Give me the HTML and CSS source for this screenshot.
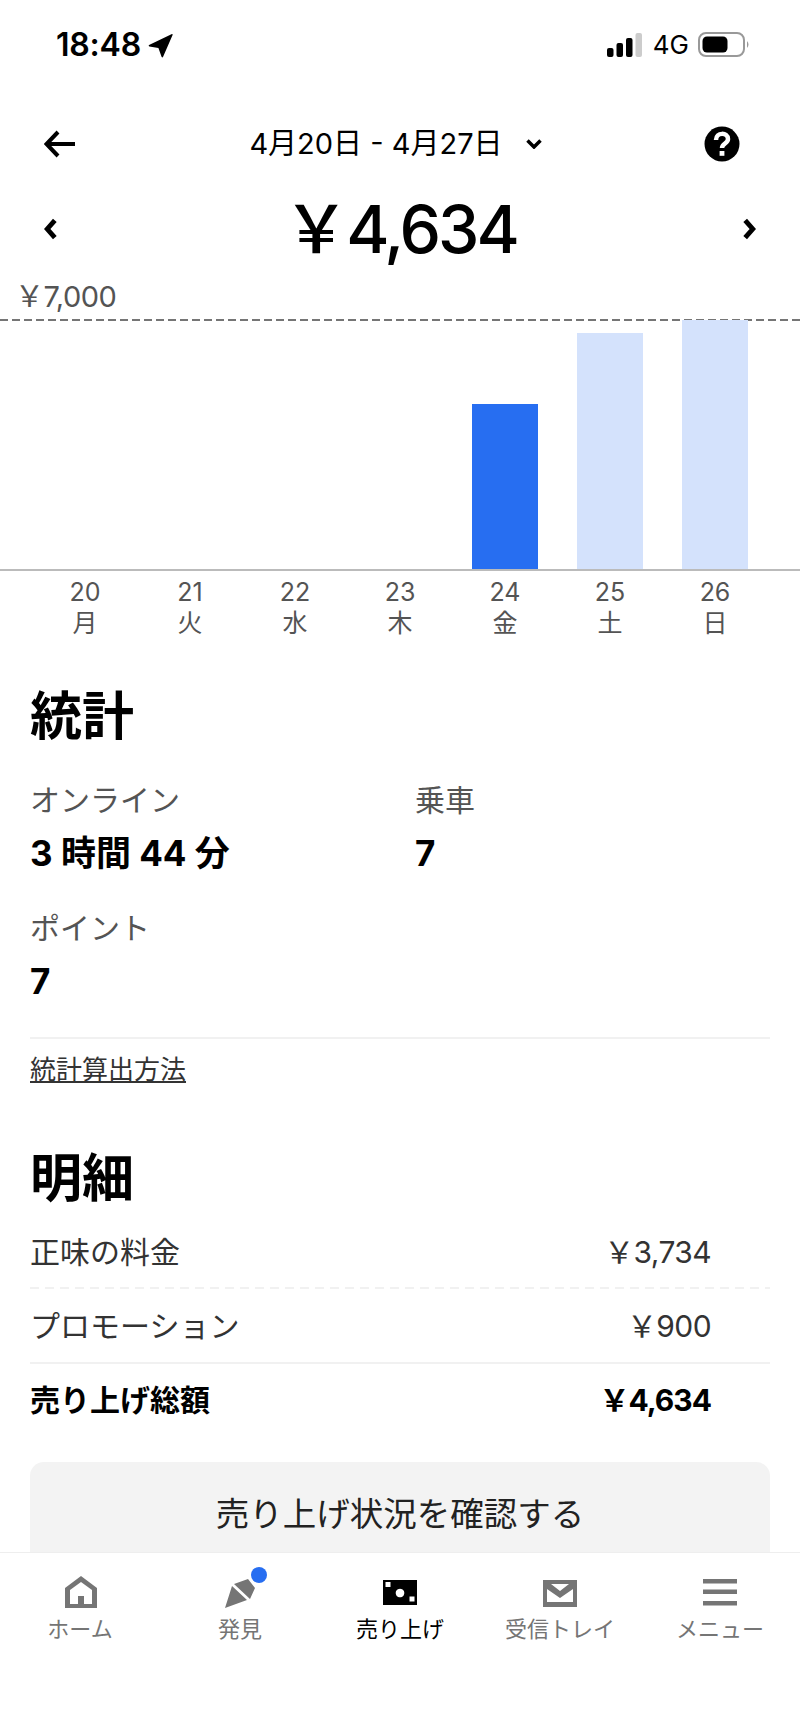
FILE: index.html
```html
<!DOCTYPE html>
<html lang="ja">
<head>
<meta charset="utf-8">
<title>売り上げ</title>
<link rel="stylesheet" href="styles.css">
</head>
<body>
<div class="page">
  <div class="status">
    <div class="status-left">
      <span class="time">18:48</span>
      <svg class="loc" viewBox="0 0 24 24"><path d="M23 1 1 11.500q-1 .8.3 1.400L10 14.300l3 8.500q.8 1.200 1.500 0L23.600 2q.2-1.400-.6-1z"/></svg>
    </div>
    <div class="status-right">
      <svg class="signal" viewBox="0 0 36 24"><rect x="0" y="15" width="6.500" height="9" rx="2"/><rect x="9.500" y="10" width="6.500" height="14" rx="2"/><rect x="19" y="5" width="6.500" height="19" rx="2"/><rect class="signal-off" x="28.500" y="0" width="6.500" height="24" rx="2"/></svg>
      <span class="net">4G</span>
      <svg class="battery" viewBox="0 0 52 26"><rect class="batt-frame" x="1" y="1" width="45" height="23" rx="7"/><rect x="4.500" y="4.500" width="25" height="16" rx="4.500"/><path class="batt-cap" d="M49 9q3 3.500 0 7z"/></svg>
    </div>
  </div>

  <div class="topbar">
    <svg class="back" viewBox="0 0 32 28"><path d="M31 14H3M14 2 2.500 14 14 26"/></svg>
    <div class="range">
      <span>4月20日 - 4月27日</span>
      <svg class="down" viewBox="0 0 16 10"><path d="M1.500 1.500 8 8l6.500-6.500"/></svg>
    </div>
    <svg class="help" viewBox="0 0 36 36"><circle cx="18" cy="18" r="17.500"/><path class="help-q" d="M12 14c0-8 12-8 12-1 0 4.500-6 4.500-6 9"/><rect class="help-dot" x="15.600" y="25" width="4.800" height="4.800"/></svg>
  </div>

  <div class="amount-row">
    <svg class="nav-arrow" viewBox="0 0 12 20"><path d="M10 2 3 10l7 8"/></svg>
    <div class="amount">&#xFFE5;4,634</div>
    <svg class="nav-arrow" viewBox="0 0 12 20"><path d="m2 2 7 8-7 8"/></svg>
  </div>

  <div class="axis-label">&#xFFE5;7,000</div>
  <div class="chart">
    <div class="col"></div><div class="col"></div><div class="col"></div><div class="col"></div>
    <div class="col"><div class="bar bar-on" style="height:165px"></div></div>
    <div class="col"><div class="bar" style="height:236px"></div></div>
    <div class="col"><div class="bar" style="height:249px"></div></div>
  </div>
  <div class="days">
    <div class="day">20<br>月</div><div class="day">21<br>火</div><div class="day">22<br>水</div><div class="day">23<br>木</div><div class="day">24<br>金</div><div class="day">25<br>土</div><div class="day">26<br>日</div>
  </div>

  <section class="stats">
    <h2 class="title">統計</h2>
    <div class="stat-grid">
      <div class="stat"><div class="stat-label">オンライン</div><div class="stat-value">3 時間 44 分</div></div>
      <div class="stat"><div class="stat-label">乗車</div><div class="stat-value">7</div></div>
      <div class="stat"><div class="stat-label">ポイント</div><div class="stat-value">7</div></div>
    </div>
    <div class="link-wrap"><span class="link">統計算出方法</span></div>
  </section>

  <section class="details">
    <h2 class="title">明細</h2>
    <div class="row row-dashed"><span>正味の料金</span><span class="val">&#xFFE5;3,734</span></div>
    <div class="row row-solid"><span>プロモーション</span><span class="val">&#xFFE5;900</span></div>
    <div class="row row-total"><span>売り上げ総額</span><span class="val">&#xFFE5;4,634</span></div>
    <div class="cta">売り上げ状況を確認する</div>
  </section>

  <nav class="tabs">
    <div class="tab">
      <svg class="tab-icon" viewBox="0 0 36 40"><path fill-rule="evenodd" d="M19 3 35 15v20H3V15zM19 9 8 17v14h8v-8h6v8h8V17z"/></svg>
      <span>ホーム</span>
    </div>
    <div class="tab">
      <span class="tab-icon-wrap">
        <svg class="tab-icon" viewBox="0 0 36 40"><path d="M3 35 10 13 25 27zM12 11 26 6l7 9-5 11z"/></svg>
        <span class="dot"></span>
      </span>
      <span>発見</span>
    </div>
    <div class="tab tab-on">
      <svg class="tab-icon" viewBox="0 0 36 40"><path fill-rule="evenodd" d="M1 7h34v25H1zM18 15.700a4.300 4.300 0 1 0 .01 0zM3.500 9v5h5V9zM27.500 23.500v5h5v-5z"/></svg>
      <span>売り上げ</span>
    </div>
    <div class="tab">
      <svg class="tab-icon" viewBox="0 0 36 40"><path fill-rule="evenodd" d="M1 7h34v27H1zM5 16v13h26V16L18 25zM9 11h18l-9 7z"/></svg>
      <span>受信トレイ</span>
    </div>
    <div class="tab">
      <svg class="tab-icon" viewBox="0 0 36 40"><path d="M1 6h34v4.500H1zM1 16.500h34V21H1zM1 28h34v4.500H1z"/></svg>
      <span>メニュー</span>
    </div>
  </nav>
</div>
</body>
</html>
```

FILE: styles.css
```css
* { box-sizing: border-box; }
html, body { margin: 0; padding: 0; background: #fff; }
body { font-family: Inter, "Noto Sans CJK JP", sans-serif; color: #000; }
.page { width: 800px; height: 1731px; overflow: hidden; position: relative; display: flex; flex-direction: column; }

.status { height: 91px; padding: 28px 50px 0 56px; display: flex; justify-content: space-between; align-items: flex-start; }
.status-left { display: flex; align-items: center; gap: 7px; height: 34px; }
.time { font-size: 32px; font-weight: 600; line-height: 34px; letter-spacing: -.2px; }
.loc { width: 25px; height: 25px; fill: #000; }
.status-right { display: flex; align-items: center; height: 34px; }
.signal { width: 36px; height: 24px; fill: #000; }
.signal-off { fill: #ccc; }
.net { font-size: 26px; line-height: 34px; margin-left: 10px; font-weight: 400; }
.battery { width: 52px; height: 26px; margin-left: 9px; fill: #000; }
.batt-frame { fill: none; stroke: #999; stroke-width: 2; }
.batt-cap { fill: #999; }

.topbar { height: 70px; display: flex; align-items: center; padding: 0 60px 0 44px; margin-top: 18px; }
.back { width: 32px; height: 28px; fill: none; stroke: #000; stroke-width: 4; flex: none; }
.range { flex: 1; display: flex; align-items: center; justify-content: center; gap: 23px; padding-left: 11px; font-size: 29px; line-height: 36px; }
.down { width: 16px; height: 10px; fill: none; stroke: #000; stroke-width: 3.500; }
.help { width: 36px; height: 36px; flex: none; fill: #000; }
.help-q { fill: none; stroke: #fff; stroke-width: 4.500; }
.help-dot { fill: #fff; }

.amount-row { height: 86px; display: flex; align-items: center; justify-content: space-between; padding: 0 44px; margin-top: 7px; }
.nav-arrow { width: 13px; height: 22px; fill: none; stroke: #000; stroke-width: 4.500; flex: none; }
.amount { font-size: 66px; line-height: 86px; font-weight: 500; letter-spacing: -3px; }

.axis-label { height: 40px; margin-top: 7px; padding-left: 15px; font-size: 29px; line-height: 36px; color: #545454; letter-spacing: -.5px; }
.chart { height: 252px; display: grid; grid-template-columns: repeat(7, 105px); padding: 1px 32.500px 0; align-items: end; border-bottom: 2px solid #bbb;
  background: repeating-linear-gradient(90deg, #757575 0 8px, transparent 8px 12px) top left / 100% 2px no-repeat; }
.col { display: flex; justify-content: center; align-items: flex-end; height: 100%; }
.bar { width: 66px; background: #d4e2fc; }
.bar-on { background: #276ef1; }
.days { display: grid; grid-template-columns: repeat(7, 105px); padding: 6px 32.500px 0; }
.day { text-align: center; font-size: 25px; line-height: 31px; color: #545454; }

.stats { padding: 0 30px; margin-top: 43px; }
.title { margin: 0; font-size: 52px; line-height: 70px; font-weight: 700; }
.stat-grid { display: grid; grid-template-columns: 385px 1fr; row-gap: 31px; margin-top: 28px; }
.stat-label { font-size: 30px; line-height: 40px; color: #545454; }
.stat-value { font-size: 35px; line-height: 48px; font-weight: 700; margin-top: 9px; }
.link-wrap { margin-top: 32px; border-top: 2px solid #f1f1f1; padding-top: 13px; }
.link { font-size: 26px; line-height: 36px; text-decoration: underline; color: #333; }

.details { padding: 0 30px; margin-top: 56px; }
.row { display: flex; justify-content: space-between; height: 75px; align-items: center; font-size: 30px; padding: 0 59px 4px 0; }
.row span { color: #333; }
.row .val { letter-spacing: -.6px; }
.row-dashed { background: repeating-linear-gradient(90deg, #f1f1f1 0 9px, transparent 9px 15px) bottom left / 100% 2px no-repeat; }
.row-solid { border-bottom: 2px solid #f1f1f1; }
.row-total { font-weight: 700; padding-bottom: 8px; }
.row-total span { color: #000; }
.row-total .val { letter-spacing: -1px; }
.cta { margin-top: 23px; height: 130px; border-radius: 14px; background: #f3f3f3; display: flex; justify-content: center; padding-top: 29px; font-size: 33.500px; line-height: 46px; color: #222; }

.tabs { position: absolute; left: 0; right: 0; top: 1552px; bottom: 0; background: #fff; border-top: 1px solid #eee; display: grid; grid-template-columns: repeat(5, 160px); align-content: start; padding-top: 20px; }
.tab { display: flex; flex-direction: column; align-items: center; gap: 1px; font-size: 22px; line-height: 30px; color: #757575; }
.tab-on { color: #000; }
.tab-icon-wrap { position: relative; display: block; height: 40px; }
.tab-icon { display: block; width: 36px; height: 40px; fill: #757575; }
.tab-on .tab-icon { fill: #000; }
.dot { position: absolute; width: 16px; height: 16px; border-radius: 50%; background: #276ef1; left: 29px; top: -6px; }
```
